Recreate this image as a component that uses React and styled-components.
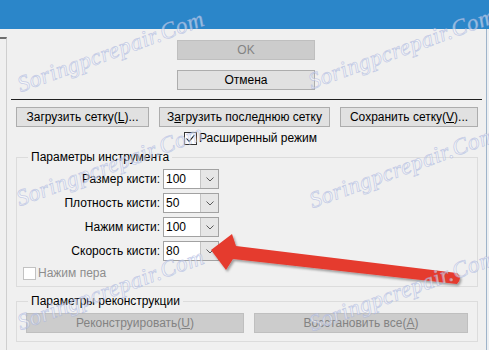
import React from "react";
import styled, { createGlobalStyle } from "styled-components";

const GlobalStyle = createGlobalStyle`
  html, body { margin: 0; padding: 0; }
  body {
    background: #f0f0f0;
    font-family: "Liberation Sans", Arial, sans-serif;
    font-size: 12px;
    color: #000;
  }
`;

const Window = styled.div`
  position: relative;
  width: 489px;
  height: 350px;
  overflow: hidden;
  background: #f0f0f0;
  display: flex;
  flex-direction: column;
`;

const TitleBar = styled.div`
  flex: none;
  height: 29px;
  background: #2b86c9;
`;

const Body = styled.div`
  flex: 1;
  display: flex;
  min-height: 0;
`;

const SidePanel = styled.div`
  width: 6px;
  margin-top: 8px;
  border-top: 2px solid #6e6e6e;
  border-right: 1px solid #cfcfcf;
`;

const Content = styled.div`
  flex: 1;
  display: flex;
  flex-direction: column;
  padding-top: 11px;
`;

const EdgeStrip = styled.div`
  width: 2px;
  border-left: 1px solid #9fb4ca;
  background: #eceff2;
`;

const TopActions = styled.div`
  display: flex;
  flex-direction: column;
  gap: 10px;
  padding-left: 170px;
`;

const Button = styled.button`
  box-sizing: border-box;
  width: ${(p) => p.$w}px;
  height: 20px;
  padding: 0;
  font-family: inherit;
  font-size: 12px;
  line-height: 18px;
  color: #000;
  background: #e1e1e1;
  border: 1px solid #adadad;
  white-space: nowrap;

  &:disabled {
    background: #cccccc;
    border-color: #bfbfbf;
    color: #838383;
  }
`;

const Separator = styled.div`
  height: 1px;
  margin: 9px 4px 0;
  background: #1f1f1f;
`;

const FileRow = styled.div`
  display: flex;
  gap: 10px;
  margin: 7px 0 0 9px;
`;

const CheckRow = styled.label`
  display: flex;
  align-items: center;
  gap: 2px;
  height: 14px;
  margin: ${(p) => p.$m};
  color: ${(p) => (p.$disabled ? "#8d8d8d" : "#000")};
`;

const Box = styled.span`
  box-sizing: border-box;
  width: 13px;
  height: 13px;
  background: #fff;
  border: 1px solid ${(p) => (p.$disabled ? "#c2c2c2" : "#333")};
  display: flex;
  align-items: center;
  justify-content: center;
`;

const Group = styled.fieldset`
  margin: ${(p) => p.$mt}px 8px 0 9px;
  padding: 0 0 ${(p) => p.$pb}px;
  border: 1px solid #dcdcdc;
  min-width: 0;
`;

const Legend = styled.legend`
  margin-left: 11px;
  padding: 0 3px;
  line-height: 16px;
  font-size: 12px;
`;

const ParamGrid = styled.div`
  display: grid;
  grid-template-columns: 143px 56px;
  column-gap: 3px;
  row-gap: 4px;
  padding-top: 4px;
  align-items: center;
`;

const ParamLabel = styled.span`
  text-align: right;
  white-space: nowrap;
`;

const Combo = styled.div`
  box-sizing: border-box;
  display: flex;
  width: 56px;
  height: 20px;
  border: 1px solid #a2a2a2;
  background: #fff;
`;

const ComboValue = styled.span`
  flex: 1;
  padding-left: 2px;
  line-height: 18px;
`;

const ComboButton = styled.span`
  width: 17px;
  background: #e6e6e6;
  border-left: 1px solid #c4c4c4;
  display: flex;
  align-items: center;
  justify-content: center;
`;

const ReconRow = styled.div`
  display: flex;
  gap: 10px;
  padding: 4px 0 0 9px;
`;

const Overlay = styled.svg`
  position: absolute;
  inset: 0;
  z-index: 2;
  pointer-events: none;
`;

const MarkLayer = styled.div`
  position: absolute;
  inset: 0;
  z-index: 3;
  pointer-events: none;
`;

const Mark = styled.span`
  position: absolute;
  left: ${(p) => p.$x}px;
  top: ${(p) => p.$y - 22}px;
  transform: rotate(-20deg);
  transform-origin: 0 100%;
  font-family: "Liberation Serif", serif;
  font-style: italic;
  font-size: 23px;
  line-height: 22px;
  letter-spacing: 0.6px;
  white-space: nowrap;
  color: rgba(255, 255, 255, 0.5);
  -webkit-text-stroke: 0.8px rgba(150, 165, 215, 0.5);
`;

const Chevron = () => (
  <svg width="8" height="5" viewBox="0 0 8 5">
    <path d="M0.5 0.5 L4 4 L7.5 0.5" fill="none" stroke="#5a5a5a" strokeWidth="1" />
  </svg>
);

const Check = () => (
  <svg width="11" height="11" viewBox="0 0 11 11">
    <path d="M1.5 5.5 L4.2 8.4 L9.6 1.8" fill="none" stroke="#222" strokeWidth="1.1" />
  </svg>
);

const params = [
  ["Размер кисти:", "100"],
  ["Плотность кисти:", "50"],
  ["Нажим кисти:", "100"],
  ["Скорость кисти:", "80"],
];

const marks = [
  [22, 96],
  [313, 93],
  [21, 210],
  [314, 212],
  [22, 334],
  [314, 335],
];

export default function App() {
  return (
    <>
      <GlobalStyle />
      <Window>
        <TitleBar />
        <Body>
          <SidePanel />
          <Content>
            <TopActions>
              <Button $w={138} disabled>OK</Button>
              <Button $w={138}>Отмена</Button>
            </TopActions>
            <Separator />
            <FileRow>
              <Button $w={133}>Загрузить сетку(<u>L</u>)...</Button>
              <Button $w={171}>З<u>а</u>грузить последнюю сетку</Button>
              <Button $w={138}>Сохранить сетку(<u>V</u>)...</Button>
            </FileRow>
            <CheckRow $m="4px 0 0 177px">
              <Box><Check /></Box>
              Расширенный режим
            </CheckRow>
            <Group $mt={4} $pb={6}>
              <Legend>Параметры инструмента</Legend>
              <ParamGrid>
                {params.map(([label, value]) => (
                  <React.Fragment key={label}>
                    <ParamLabel>{label}</ParamLabel>
                    <Combo>
                      <ComboValue>{value}</ComboValue>
                      <ComboButton><Chevron /></ComboButton>
                    </Combo>
                  </React.Fragment>
                ))}
              </ParamGrid>
              <CheckRow $m="5px 0 0 6px" $disabled>
                <Box $disabled />
                Нажим пера
              </CheckRow>
            </Group>
            <Group $mt={6} $pb={8}>
              <Legend>Параметры реконструкции</Legend>
              <ReconRow>
                <Button $w={218} disabled>Реконструировать(<u>U</u>)</Button>
                <Button $w={214} disabled>Восстановить все(<u>A</u>)</Button>
              </ReconRow>
            </Group>
          </Content>
          <EdgeStrip />
        </Body>

        <Overlay width="489" height="350" viewBox="0 0 489 350">
          <defs>
            <filter id="shadow" x="-10%" y="-50%" width="120%" height="200%">
              <feDropShadow dx="1.5" dy="2" stdDeviation="1.2" floodColor="#000" floodOpacity="0.35" />
            </filter>
          </defs>
          <path
            d="M211 250 L232 234 L236 246 L457 273 Q463 278 457 284 L233 259 L226 270 Z"
            fill="#e53a2f"
            filter="url(#shadow)"
          />
        </Overlay>

        <MarkLayer>
          {marks.map(([x, y]) => (
            <Mark key={`${x}-${y}`} $x={x} $y={y}>Soringpcrepair.Com</Mark>
          ))}
        </MarkLayer>
      </Window>
    </>
  );
}
